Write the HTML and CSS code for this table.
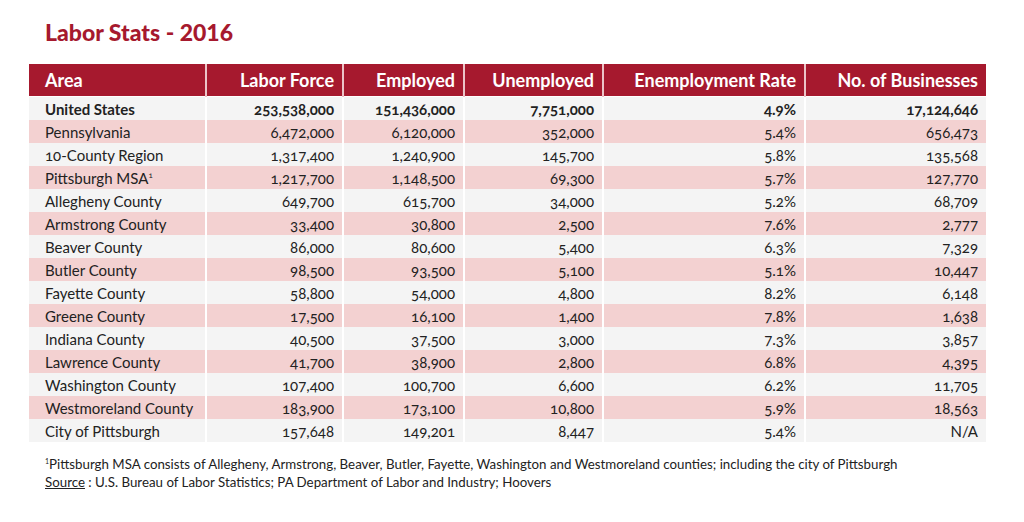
FILE: index.html
```html
<!DOCTYPE html>
<html>
<head>
<meta charset="utf-8">
<link rel="stylesheet" href="styles.css">
</head>
<body>
<div class="page">
  <h1 class="title">Labor Stats - 2016</h1>
  <table class="stats">
    <colgroup>
      <col class="c-area"><col class="c-lf"><col class="c-emp"><col class="c-unemp"><col class="c-rate"><col class="c-bus">
    </colgroup>
    <thead>
      <tr><th class="left">Area</th><th>Labor Force</th><th>Employed</th><th>Unemployed</th><th>Enemployment Rate</th><th>No. of Businesses</th></tr>
    </thead>
    <tbody>
      <tr class="odd bold"><td class="left">United States</td><td>253,538,000</td><td>151,436,000</td><td>7,751,000</td><td>4.9%</td><td>17,124,646</td></tr>
      <tr class="even"><td class="left">Pennsylvania</td><td>6,472,000</td><td>6,120,000</td><td>352,000</td><td>5.4%</td><td>656,473</td></tr>
      <tr class="odd"><td class="left">10-County Region</td><td>1,317,400</td><td>1,240,900</td><td>145,700</td><td>5.8%</td><td>135,568</td></tr>
      <tr class="even"><td class="left">Pittsburgh MSA<sup>1</sup></td><td>1,217,700</td><td>1,148,500</td><td>69,300</td><td>5.7%</td><td>127,770</td></tr>
      <tr class="odd"><td class="left">Allegheny County</td><td>649,700</td><td>615,700</td><td>34,000</td><td>5.2%</td><td>68,709</td></tr>
      <tr class="even"><td class="left">Armstrong County</td><td>33,400</td><td>30,800</td><td>2,500</td><td>7.6%</td><td>2,777</td></tr>
      <tr class="odd"><td class="left">Beaver County</td><td>86,000</td><td>80,600</td><td>5,400</td><td>6.3%</td><td>7,329</td></tr>
      <tr class="even"><td class="left">Butler County</td><td>98,500</td><td>93,500</td><td>5,100</td><td>5.1%</td><td>10,447</td></tr>
      <tr class="odd"><td class="left">Fayette County</td><td>58,800</td><td>54,000</td><td>4,800</td><td>8.2%</td><td>6,148</td></tr>
      <tr class="even"><td class="left">Greene County</td><td>17,500</td><td>16,100</td><td>1,400</td><td>7.8%</td><td>1,638</td></tr>
      <tr class="odd"><td class="left">Indiana County</td><td>40,500</td><td>37,500</td><td>3,000</td><td>7.3%</td><td>3,857</td></tr>
      <tr class="even"><td class="left">Lawrence County</td><td>41,700</td><td>38,900</td><td>2,800</td><td>6.8%</td><td>4,395</td></tr>
      <tr class="odd"><td class="left">Washington County</td><td>107,400</td><td>100,700</td><td>6,600</td><td>6.2%</td><td>11,705</td></tr>
      <tr class="even"><td class="left">Westmoreland County</td><td>183,900</td><td>173,100</td><td>10,800</td><td>5.9%</td><td>18,563</td></tr>
      <tr class="odd"><td class="left">City of Pittsburgh</td><td>157,648</td><td>149,201</td><td>8,447</td><td>5.4%</td><td>N/A</td></tr>
    </tbody>
  </table>
  <div class="notes">
    <p><sup class="fn">1</sup>Pittsburgh MSA consists of Allegheny, Armstrong, Beaver, Butler, Fayette, Washington and Westmoreland counties; including the city of Pittsburgh</p>
    <p><span class="src">Source</span> : U.S. Bureau of Labor Statistics; PA Department of Labor and Industry; Hoovers</p>
  </div>
</div>
</body>
</html>
```

FILE: styles.css
```css
html, body {
  margin: 0;
  padding: 0;
  background: #ffffff;
}
body {
  font-family: Lato, "Open Sans", sans-serif;
  color: #222222;
}
.page {
  padding: 20px 38px 0 29px;
}
.title {
  margin: 0 0 0 16px;
  font-size: 23px;
  line-height: 24px;
  font-weight: 900;
  color: #a6192e;
  height: 24px;
}
.stats {
  margin-top: 20px;
  width: 957px;
  table-layout: fixed;
  border-collapse: collapse;
  font-variant-numeric: oldstyle-nums;
}
.c-area { width: 177px; }
.c-lf { width: 137px; }
.c-emp { width: 121px; }
.c-unemp { width: 139px; }
.c-rate { width: 202px; }
.c-bus { width: 181px; }
.stats th {
  background: #a6192e;
  color: #ffffff;
  font-size: 18px;
  font-weight: 700;
  height: 32px;
  padding: 0 8px 0 16px;
  text-align: right;
  border-left: 2px solid #ecc4c8;
  border-bottom: 1px solid #ffffff;
  white-space: nowrap;
}
.stats th:first-child { border-left: none; }
.stats td {
  height: 23px;
  padding: 0 8px 0 16px;
  font-size: 15px;
  text-align: right;
  border-left: 2px solid #ffffff;
  white-space: nowrap;
}
.stats td:first-child { border-left: none; }
.stats .left { text-align: left; }
.stats tr.odd td { background: #f4f4f4; }
.stats tr.even td { background: #f3d1d1; }
.stats tr.bold td { font-weight: 700; }
.stats sup {
  font-size: 8px;
  vertical-align: 6px;
  line-height: 0;
}
.notes {
  margin: 13px 0 0 16px;
  font-size: 13.3px;
  line-height: 18px;
  color: #222222;
}
.notes p { margin: 0; }
.fn {
  font-size: 7px;
  vertical-align: 5px;
  line-height: 0;
}
.src { text-decoration: underline; }
```
